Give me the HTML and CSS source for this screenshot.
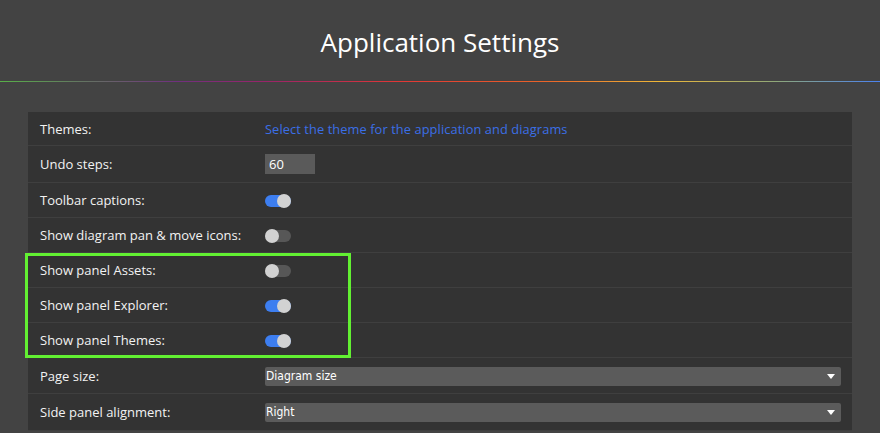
FILE: index.html
```html
<!DOCTYPE html>
<html lang="en">
  <head>
    <meta charset="UTF-8" />
    <meta name="viewport" content="width=device-width, initial-scale=1.0" />
    <title>Application Settings</title>
    <link rel="stylesheet" href="styles.css">
  </head>
  <body>
    <header class="top">
      <h1>Application Settings</h1>
    </header>
    <div class="rainbow"></div>

    <!-- settings list -->
    <div class="panel">
      <div class="row first">
        <span class="label">Themes:</span>
        <a class="link">Select the theme for the application and diagrams</a>
      </div>
      <div class="row undo">
        <span class="label">Undo steps:</span>
        <span class="num">60</span>
      </div>
      <div class="row">
        <span class="label">Toolbar captions:</span>
        <span class="toggle on"></span>
      </div>
      <div class="row">
        <span class="label">Show diagram pan &amp; move icons:</span>
        <span class="toggle"></span>
      </div>
      <div class="row">
        <span class="label">Show panel Assets:</span>
        <span class="toggle"></span>
      </div>
      <div class="row">
        <span class="label">Show panel Explorer:</span>
        <span class="toggle on"></span>
      </div>
      <div class="row">
        <span class="label">Show panel Themes:</span>
        <span class="toggle on"></span>
      </div>
      <div class="row sel">
        <span class="label">Page size:</span>
        <span class="select">Diagram size<i class="arrow"></i></span>
      </div>
      <div class="row sel last">
        <span class="label">Side panel alignment:</span>
        <span class="select">Right<i class="arrow"></i></span>
      </div>
      <!-- highlight round the panel rows -->
      <div class="mark"></div>
    </div>
  </body>
</html>
```

FILE: styles.css
```css
body {
  margin: 0;
  background: #434343;
  font-family: "Open Sans", "Liberation Sans", sans-serif;
  color: #f2f2f2;
}
.top {
  height: 81px;
  display: flex;
  align-items: center;
  justify-content: center;
}
.top h1 {
  margin: 0;
  font-size: 26px;
  font-weight: 400;
  color: #fff;
  padding-top: 2px;
}
.rainbow {
  height: 1px;
  background: linear-gradient(to right, #58b048 0%, #70307e 20%, #98246a 30%, #e03636 45%, #ea6428 62%, #f0b838 75%, #90a878 88%, #4a82f0 100%);
}
.panel {
  position: relative;
  margin: 30px 0 0 28px;
  width: 824px;
  background: #333333;
}
.row {
  height: 34px;
  display: flex;
  align-items: center;
  padding-left: 12px;
  border-bottom: 1px solid #3f3f3f;
  font-size: 13px;
}
.row.first {
  height: 33px;
}
.row.undo {
  height: 36px;
}
.row.sel {
  height: 35px;
}
.row.last {
  height: 36px;
}
.label {
  width: 225px;
  flex: none;
}
.link {
  color: #3b6fe6;
  font-size: 12.8px;
  letter-spacing: 0.1px;
}
.num {
  width: 46px;
  height: 20px;
  line-height: 20px;
  padding-left: 4px;
  background: #5a5a5a;
  color: #fff;
}
.toggle {
  position: relative;
  width: 26px;
  height: 12px;
  margin-top: 2px;
  border-radius: 6px;
  background: #575757;
}
.toggle::after {
  content: "";
  position: absolute;
  top: -1px;
  left: 0;
  width: 14px;
  height: 14px;
  border-radius: 50%;
  background: #d2d2d2;
}
.toggle.on {
  background: #3d7ef0;
}
.toggle.on::after {
  left: 12px;
}
.select {
  position: relative;
  width: 575px;
  height: 19px;
  line-height: 19px;
  margin-top: 1px;
  padding-left: 1px;
  border-radius: 2px;
  background: #5b5b5b;
  color: #fff;
  font-family: "DejaVu Sans Condensed", "DejaVu Sans", sans-serif;
  font-size: 12px;
}
.arrow {
  position: absolute;
  right: 6px;
  top: 7px;
  border-left: 4px solid transparent;
  border-right: 4px solid transparent;
  border-top: 5px solid #fff;
}
.mark {
  position: absolute;
  left: -3px;
  top: 141px;
  width: 326px;
  height: 105px;
  box-sizing: border-box;
  border: 3px solid #62f032;
}
```
